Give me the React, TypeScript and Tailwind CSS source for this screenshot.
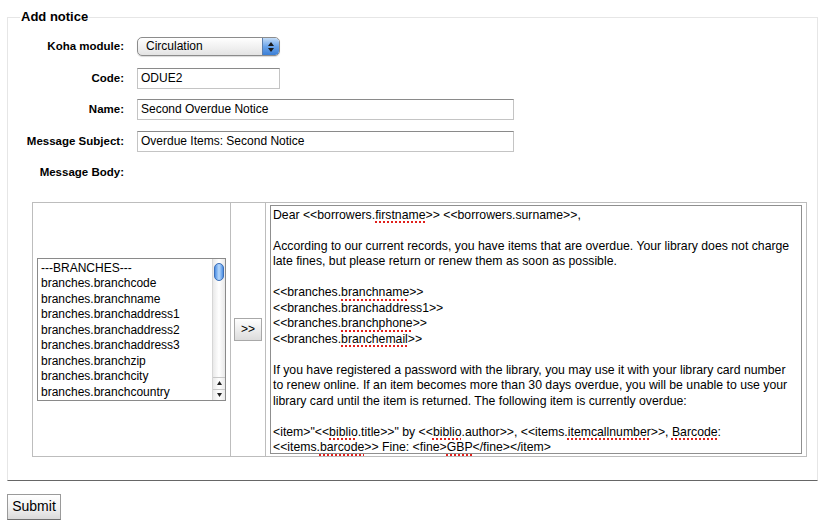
import React from "react";

const fieldLabel =
  "w-[116px] shrink-0 text-right text-[11.5px] font-bold text-black";

const textInput =
  "h-[21px] border border-[#c4c4c4] border-t-[#8a8a8a] bg-white pl-[3px] text-[12px] leading-[19px] text-black";

const fields = [
  "branches.branchcode",
  "branches.branchname",
  "branches.branchaddress1",
  "branches.branchaddress2",
  "branches.branchaddress3",
  "branches.branchzip",
  "branches.branchcity",
  "branches.branchcountry",
];

function Sp({ children }: { children: React.ReactNode }) {
  return (
    <span className="underline decoration-[#e0201c] decoration-dotted decoration-2 underline-offset-[3px]">
      {children}
    </span>
  );
}

function Row({ label, children }: { label: string; children?: React.ReactNode }) {
  return (
    <div className="flex h-[31.5px] items-center gap-[13px]">
      <div className={fieldLabel}>{label}</div>
      {children}
    </div>
  );
}

function ModuleSelect() {
  return (
    <div className="flex h-[19px] w-[143px] items-stretch overflow-hidden rounded-[5px] border border-[#8c8c8c] bg-gradient-to-b from-white to-[#e4e4e4] shadow-[0_1px_1px_rgba(0,0,0,0.15)]">
      <span className="flex-1 pl-[8px] text-[12px] leading-[17px] text-black">Circulation</span>
      <span className="flex w-[17px] flex-col items-center justify-center gap-[2px] rounded-r-[4px] border-l border-[#5b7fae] bg-gradient-to-b from-[#c3dcf7] via-[#6aa4ea] to-[#3b7fd6]">
        <svg width="6" height="4" viewBox="0 0 6 4">
          <path d="M3 0 L6 4 L0 4 Z" fill="#1a1a1a" />
        </svg>
        <svg width="6" height="4" viewBox="0 0 6 4">
          <path d="M0 0 L6 0 L3 4 Z" fill="#1a1a1a" />
        </svg>
      </span>
    </div>
  );
}

function FieldList() {
  return (
    <div className="flex h-[143px] w-[189px] border border-[#8a8a8a] bg-white">
      <div className="flex-1 pl-[3px] pt-[2px] text-[12px] leading-[15.5px] text-black">
        <div>---BRANCHES---</div>
        {fields.map((f) => (
          <div key={f} className="whitespace-nowrap">
            {f}
          </div>
        ))}
      </div>
      <div className="flex w-[13px] flex-col border-l border-[#d6d6d6] bg-gradient-to-r from-[#e9e9e9] via-white to-[#e9e9e9]">
        <div className="mx-auto mt-[4px] h-[18px] w-[10px] rounded-full border border-[#3d6fb8] bg-gradient-to-r from-[#4d8fe3] via-[#b9dafc] to-[#4d8fe3]" />
        <div className="flex-1" />
        <div className="flex h-[12px] items-center justify-center border-t border-[#c8c8c8]">
          <svg width="5" height="4" viewBox="0 0 5 4">
            <path d="M2.5 0 L5 4 L0 4 Z" fill="#222" />
          </svg>
        </div>
        <div className="flex h-[11px] items-center justify-center border-t border-[#c8c8c8]">
          <svg width="5" height="4" viewBox="0 0 5 4">
            <path d="M0 0 L5 0 L2.5 4 Z" fill="#222" />
          </svg>
        </div>
      </div>
    </div>
  );
}

function MessageBody() {
  return (
    <div className="h-[249px] w-[532px] border border-[#8f8f8f] bg-white pl-[2px] pt-[2px] text-[12.25px] leading-[15.5px] whitespace-nowrap text-black">
      <div>
        Dear &lt;&lt;borrowers.<Sp>firstname</Sp>&gt;&gt; &lt;&lt;borrowers.surname&gt;&gt;,
      </div>
      <div>&nbsp;</div>
      <div>
        According to our current records, you have items that are overdue. Your library does not charge
      </div>
      <div>late fines, but please return or renew them as soon as possible.</div>
      <div>&nbsp;</div>
      <div>
        &lt;&lt;branches.<Sp>branchname</Sp>&gt;&gt;
      </div>
      <div>&lt;&lt;branches.branchaddress1&gt;&gt;</div>
      <div>
        &lt;&lt;branches.<Sp>branchphone</Sp>&gt;&gt;
      </div>
      <div>
        &lt;&lt;branches.<Sp>branchemail</Sp>&gt;&gt;
      </div>
      <div>&nbsp;</div>
      <div>
        If you have registered a password with the library, you may use it with your library card number
      </div>
      <div>
        to renew online. If an item becomes more than 30 days overdue, you will be unable to use your
      </div>
      <div>library card until the item is returned. The following item is currently overdue:</div>
      <div>&nbsp;</div>
      <div>
        &lt;item&gt;"&lt;&lt;<Sp>biblio</Sp>.title&gt;&gt;" by &lt;&lt;<Sp>biblio</Sp>.author&gt;&gt;,
        &lt;&lt;items.<Sp>itemcallnumber</Sp>&gt;&gt;, <Sp>Barcode</Sp>:
      </div>
      <div>
        &lt;&lt;items.<Sp>barcode</Sp>&gt;&gt; Fine: &lt;fine&gt;<Sp>GBP</Sp>&lt;/fine&gt;&lt;/item&gt;
      </div>
    </div>
  );
}

export default function App() {
  return (
    <div className="h-[528px] w-[830px] bg-white font-['Liberation_Sans',Arial,sans-serif] text-black">
      <fieldset className="mx-[7px] mt-[9px] w-[811px] border border-[#e6e6e6] border-b-[#666] px-0 pb-[23px] pt-0">
        <legend className="ml-[12px] px-[1px] text-[13px] font-bold leading-[16px]">Add notice</legend>

        <div className="pt-[6px]">
          <Row label="Koha module:">
            <ModuleSelect />
          </Row>
          <Row label="Code:">
            <div className={`${textInput} w-[143px]`}>ODUE2</div>
          </Row>
          <Row label="Name:">
            <div className={`${textInput} w-[377px]`}>Second Overdue Notice</div>
          </Row>
          <Row label="Message Subject:">
            <div className={`${textInput} w-[377px]`}>Overdue Items: Second Notice</div>
          </Row>
          <Row label="Message Body:" />
        </div>

        <table className="ml-[24px] mt-[13px] w-[774px] border-collapse border border-[#bdbdbd]">
          <tbody>
            <tr>
              <td className="w-[198px] border border-[#bdbdbd] px-[4px] align-middle">
                <FieldList />
              </td>
              <td className="w-[35px] border border-[#bdbdbd] px-[3px] align-middle">
                <button className="flex h-[23px] w-[28px] items-center justify-center border border-[#a8a8a8] bg-gradient-to-b from-white to-[#dcdcdc] text-[12px] text-black">
                  &gt;&gt;
                </button>
              </td>
              <td className="border border-[#bdbdbd] px-[4px] py-[2px] align-middle">
                <MessageBody />
              </td>
            </tr>
          </tbody>
        </table>
      </fieldset>

      <div className="ml-[7px] mt-[13px]">
        <button className="h-[26px] w-[54px] border border-[#9a9a9a] border-b-[#6f6f6f] bg-gradient-to-b from-white via-[#f2f2f2] to-[#dadada] text-[14px] text-black">
          Submit
        </button>
      </div>
    </div>
  );
}
